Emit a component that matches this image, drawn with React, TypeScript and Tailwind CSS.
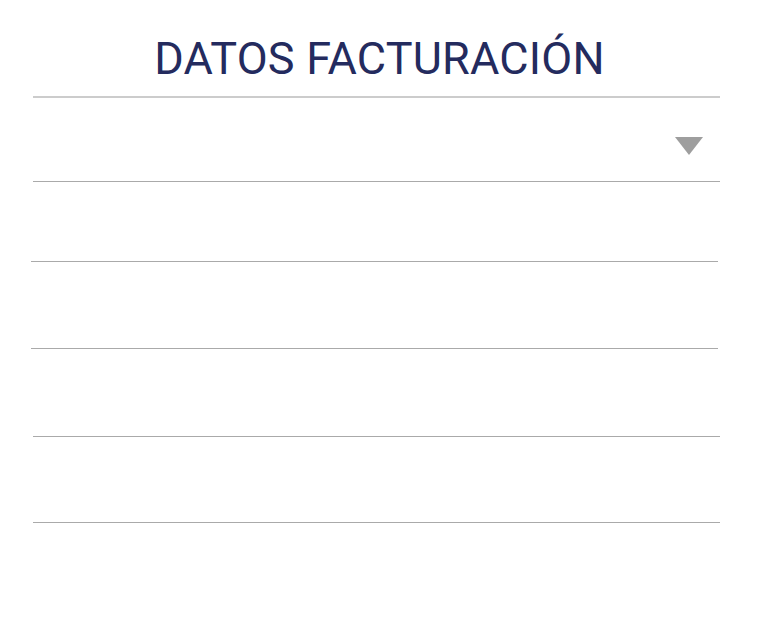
const fields = [
  { id: "tipo", h: "h-[84px]", shift: "ml-[33px]", select: true },
  { id: "nombre", h: "h-[80px]", shift: "ml-[31px]", select: false },
  { id: "nif", h: "h-[87px]", shift: "ml-[31px]", select: false },
  { id: "direccion", h: "h-[88px]", shift: "ml-[33px]", select: false },
  { id: "cp", h: "h-[86px]", shift: "ml-[33px]", select: false },
];

export default function App() {
  return (
    <div className="w-[765px] h-[638px] bg-white font-['Roboto',sans-serif]">
      <div className="ml-[33px] w-[687px] pt-[29px] h-[98px] border-b-2 border-[#cccccc]">
        <h1 className="pl-[6px] text-center text-[45px] leading-[60px] text-[#242b5e] tracking-[0.2px]">
          DATOS FACTURACIÓN
        </h1>
      </div>
      {fields.map((f) => (
        <div
          key={f.id}
          className={`${f.shift} ${f.h} w-[687px] border-b border-[#aaaaaa] flex items-center justify-end pr-[17px]`}
        >
          {f.select && (
            <svg width="28" height="18" viewBox="0 0 28 18" className="mt-[12px]">
              <polygon points="0,0 28,0 14,18" fill="#9e9e9e" />
            </svg>
          )}
        </div>
      ))}
    </div>
  );
}
